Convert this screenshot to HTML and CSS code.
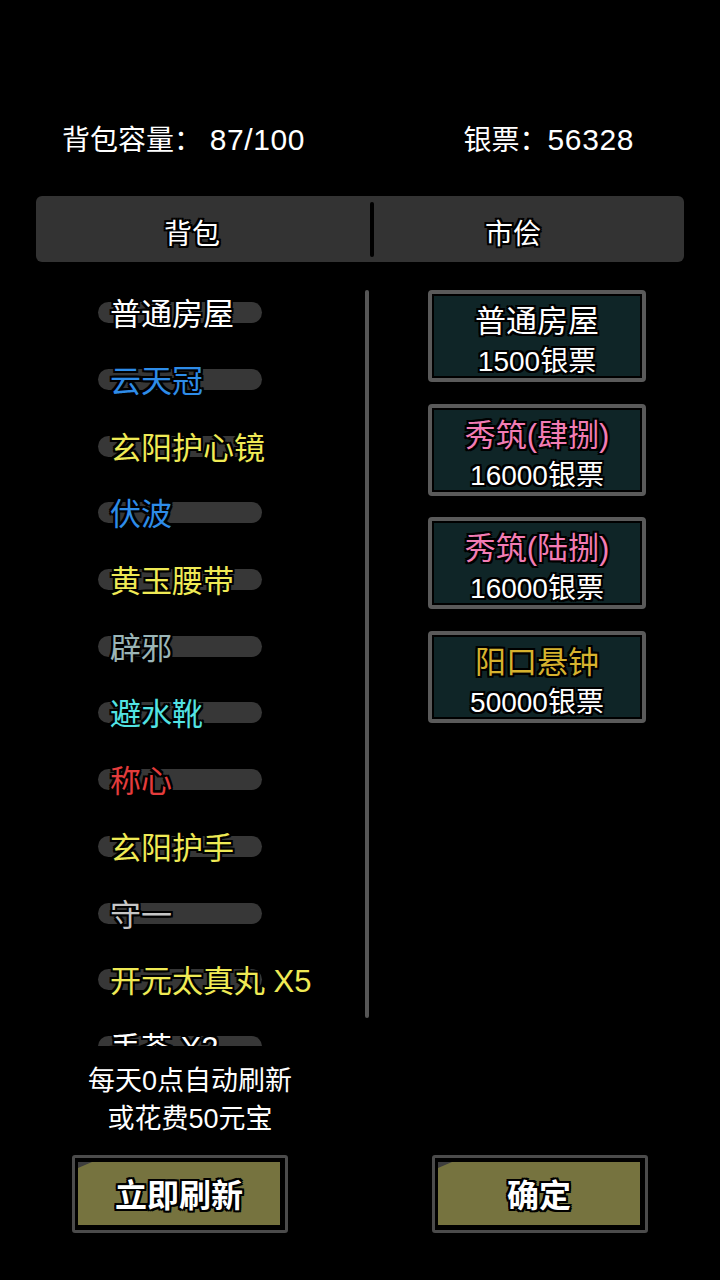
FILE: index.html
```html
<!DOCTYPE html>
<html lang="zh-CN">
<head>
<meta charset="utf-8">
<title>背包 / 市侩</title>
<link rel="stylesheet" href="styles.css">
</head>
<body>
<div class="screen">
  <header class="top">
    <span class="cap">背包容量：&nbsp;<span class="num">87/100</span></span>
    <span class="money">银票：<span class="num">56328</span></span>
  </header>

  <nav class="tabs">
    <div class="tab tab-left">背包</div>
    <div class="divider"></div>
    <div class="tab tab-right">市侩</div>
  </nav>

  <main class="main">
    <div class="list">
      <div class="row"><span class="pill"></span><span class="name c-white">普通房屋</span></div>
      <div class="row"><span class="pill"></span><span class="name c-blue">云天冠</span></div>
      <div class="row"><span class="pill"></span><span class="name c-yellow">玄阳护心镜</span></div>
      <div class="row"><span class="pill"></span><span class="name c-blue">伏波</span></div>
      <div class="row"><span class="pill"></span><span class="name c-yellow">黄玉腰带</span></div>
      <div class="row"><span class="pill"></span><span class="name c-slate">辟邪</span></div>
      <div class="row"><span class="pill"></span><span class="name c-cyan">避水靴</span></div>
      <div class="row"><span class="pill"></span><span class="name c-red">称心</span></div>
      <div class="row"><span class="pill"></span><span class="name c-yellow">玄阳护手</span></div>
      <div class="row"><span class="pill"></span><span class="name c-gray">守一</span></div>
      <div class="row"><span class="pill"></span><span class="name c-yellow">开元太真丸 X5</span></div>
      <div class="row"><span class="pill"></span><span class="name c-white">丢苓 X2</span></div>
    </div>
    <div class="scroll"></div>
    <div class="cards">
      <div class="card">
        <div class="card-title c-white">普通房屋</div>
        <div class="card-price">1500银票</div>
      </div>
      <div class="card">
        <div class="card-title c-pink">秀筑(肆捌)</div>
        <div class="card-price">16000银票</div>
      </div>
      <div class="card">
        <div class="card-title c-pink">秀筑(陆捌)</div>
        <div class="card-price">16000银票</div>
      </div>
      <div class="card">
        <div class="card-title c-gold">阳口悬钟</div>
        <div class="card-price">50000银票</div>
      </div>
    </div>
  </main>

  <section class="note">
    <div>每天0点自动刷新</div>
    <div>或花费50元宝</div>
  </section>

  <div class="buttons">
    <button class="btn"><span class="btn-face">立即刷新</span></button>
    <button class="btn"><span class="btn-face">确定</span></button>
  </div>
</div>
</body>
</html>
```

FILE: styles.css
```css
html, body {
  margin: 0;
  padding: 0;
  background: #000;
}

body {
  font-family: "Liberation Sans", "Noto Sans CJK SC", sans-serif;
  color: #fff;
}

.screen {
  width: 720px;
  height: 1280px;
  overflow: hidden;
  background: #000;
}

/* header */
.top {
  display: flex;
  justify-content: space-between;
  padding: 120px 86px 0 62px;
  font-size: 28px;
  line-height: 40px;
  height: 40px;
}

.num {
  font-size: 30px;
  letter-spacing: 0.6px;
}

/* tabs */
.tabs {
  margin: 36px 36px 0 36px;
  height: 66px;
  background: #333333;
  border-radius: 6px;
  display: grid;
  grid-template-columns: 334px 4px 1fr;
}

.tab {
  font-size: 28px;
  line-height: 66px;
  padding-top: 6px;
  box-sizing: border-box;
  text-align: center;
  text-shadow:
    2px 0 0 #000, -2px 0 0 #000, 0 2px 0 #000, 0 -2px 0 #000,
    2px 2px 0 #000, -2px -2px 0 #000, 2px -2px 0 #000, -2px 2px 0 #000;
}

.tab-left { padding-right: 22px; }
.tab-right { padding-right: 32px; }

.divider {
  margin-top: 6px;
  height: 55px;
  width: 4px;
  background: #000;
  border-radius: 2px;
}

/* main */
.main {
  display: flex;
  align-items: flex-start;
  margin-top: 18px;
}

.list {
  width: 365px;
  height: 766px;
  overflow: hidden;
  padding-left: 98px;
  box-sizing: border-box;
}

.row {
  height: 66.7px;
  display: grid;
  align-items: center;
  justify-items: start;
}

.pill,
.name {
  grid-area: 1 / 1;
}

.pill {
  width: 164px;
  height: 21px;
  margin-top: -1px;
  background: #373737;
  border-radius: 11px;
}

.name {
  padding-left: 12px;
  margin-top: 4px;
  font-size: 31px;
  line-height: 40px;
  white-space: nowrap;
  text-shadow:
    2px 0 0 #000, -2px 0 0 #000, 0 2px 0 #000, 0 -2px 0 #000,
    2px 2px 0 #000, -2px -2px 0 #000, 2px -2px 0 #000, -2px 2px 0 #000;
}

.c-white { color: #ffffff; }
.c-blue { color: #2e8ce8; }
.c-yellow { color: #efea55; }
.c-slate { color: #9ab5b7; }
.c-cyan { color: #52e3e3; }
.c-red { color: #e33c3c; }
.c-gray { color: #c6c6c6; }
.c-pink { color: #f27cb4; }
.c-gold { color: #d6b22e; }

.scroll {
  width: 4px;
  height: 728px;
  margin-top: 10px;
  background: #565656;
  border-radius: 2px;
}

.cards {
  margin-left: 59px;
  margin-top: 10px;
  width: 218px;
  display: flex;
  flex-direction: column;
  gap: 21.5px;
}

.card {
  height: 92px;
  box-sizing: border-box;
  border: 4px solid #5a5a5a;
  border-radius: 4px;
  background: #0f2527;
  box-shadow: inset 0 0 0 2px #000;
  padding-top: 8px;
  text-align: center;
  text-shadow:
    2px 0 0 #000, -2px 0 0 #000, 0 2px 0 #000, 0 -2px 0 #000,
    2px 2px 0 #000, -2px -2px 0 #000, 2px -2px 0 #000, -2px 2px 0 #000;
}

.card-title {
  font-size: 31px;
  line-height: 40px;
  height: 40px;
}

.card-price {
  font-size: 28px;
  line-height: 40px;
  height: 40px;
  color: #fff;
}

/* bottom */
.note {
  margin-top: 16px;
  width: 380px;
  text-align: center;
  font-size: 27px;
  line-height: 38px;
}

.buttons {
  margin-top: 17px;
  display: flex;
  gap: 144px;
  padding-left: 72px;
}

.btn {
  width: 216px;
  height: 78px;
  box-sizing: border-box;
  border: 3px solid #4b4b4b;
  border-radius: 3px;
  background: #000;
  padding: 4px 5px 5px 3px;
  margin: 0;
  display: flex;
  font-family: inherit;
  cursor: pointer;
}

.btn-face {
  position: relative;
  flex: 1;
  background: #76733f;
  color: #fff;
  font-size: 32px;
  font-weight: 700;
  line-height: 68px;
  text-align: center;
  text-shadow:
    2px 0 0 #000, -2px 0 0 #000, 0 2px 0 #000, 0 -2px 0 #000,
    2px 2px 0 #000, -2px -2px 0 #000, 2px -2px 0 #000, -2px 2px 0 #000;
}

.btn-face::before {
  content: "";
  position: absolute;
  left: 0;
  top: 0;
  width: 14px;
  height: 6px;
  background: #3e3e3e;
  clip-path: polygon(0 0, 100% 0, 0 100%);
}
```
